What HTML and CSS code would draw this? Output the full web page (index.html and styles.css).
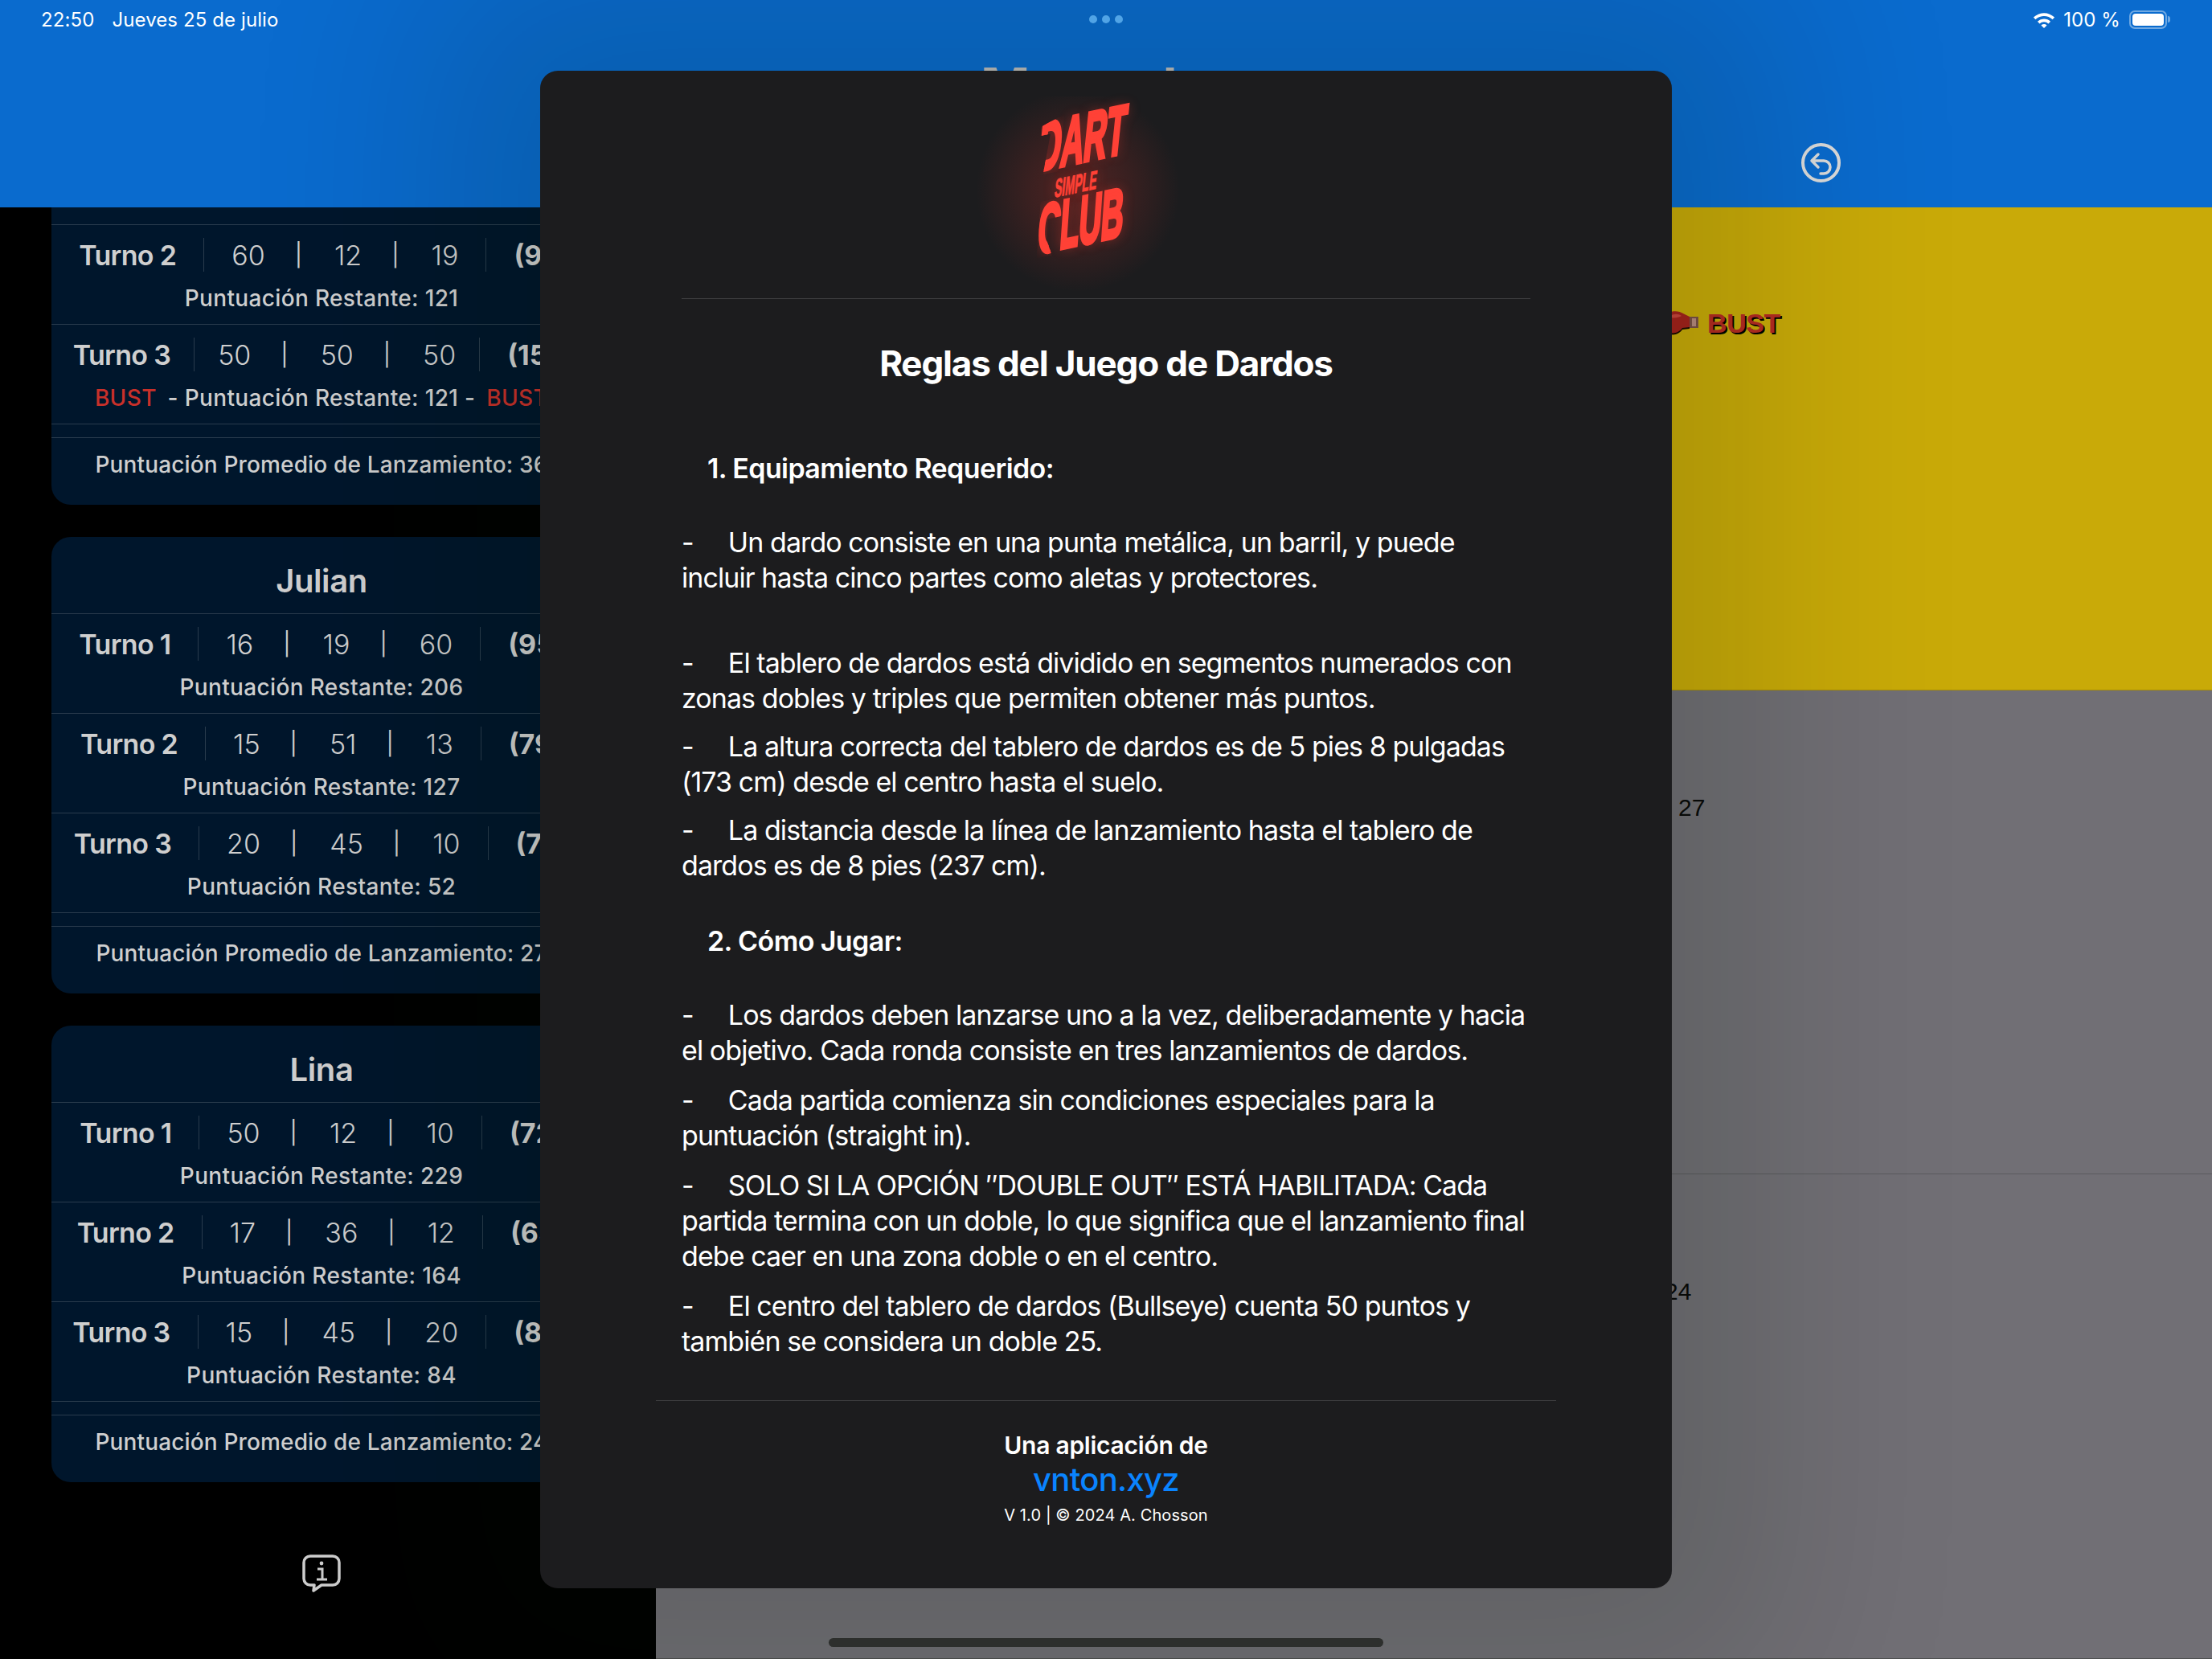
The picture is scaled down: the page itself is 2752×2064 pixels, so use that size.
FILE: index.html
```html
<!DOCTYPE html>
<html lang="es">
<head>
<meta charset="utf-8">
<title>Marcador</title>
<link rel="stylesheet" href="styles.css">
</head>
<body>
<div class="app">
  <header class="header">
    <div class="status">
      <div class="status-left"><span>22:50</span><span>Jueves 25 de julio</span></div>
      <div class="dots"><i></i><i></i><i></i></div>
      <div class="status-right">
        <svg class="wifi" viewBox="0 0 28 20" width="30" height="21"><path d="M1.5 7.2a18 18 0 0 1 25 0l-2.400 2.600a14.500 14.500 0 0 0-20.200 0z" fill="#fff"/><path d="M6.300 12.200a11 11 0 0 1 15.400 0l-2.500 2.500a7.500 7.500 0 0 0-10.400 0z" fill="#fff"/><path d="M10.600 16.600a5 5 0 0 1 6.800 0L14 20z" fill="#fff"/></svg>
        <span>100 %</span>
        <div class="battery"><div class="battery-fill"></div></div>
        <div class="battery-nub"></div>
      </div>
    </div>
    <div class="header-bar">
      <div></div>
      <h1 class="app-title">Marcador</h1>
      <div class="header-actions">
        <svg viewBox="0 0 49 49" width="49" height="49" fill="none" stroke="#dcdcdc"><circle cx="24.500" cy="24.500" r="22.500" stroke-width="4"/><path d="M21 14l-8 8 8 8M13 22h15a8 8 0 0 1 0 16h-4" stroke-width="3.500" stroke-linecap="round" stroke-linejoin="round"/></svg>
      </div>
    </div>
  </header>

  <main class="main">
    <aside class="sidebar">
      <section class="card card-scrolled">
        <div class="card-clip"></div>
        <div class="row">
          <div class="turn"><span class="label">Turno 2</span><span class="scores"><span class="num">60</span><span class="pipe">|</span><span class="num">12</span><span class="pipe">|</span><span class="num">19</span></span><span class="total">(91)</span></div>
          <p class="rest">Puntuación Restante: 121</p>
        </div>
        <div class="row">
          <div class="turn turn-wide"><span class="label">Turno 3</span><span class="scores"><span class="num">50</span><span class="pipe">|</span><span class="num">50</span><span class="pipe">|</span><span class="num">50</span></span><span class="total">(150)</span></div>
          <p class="rest"><span class="bust">BUST</span> - Puntuación Restante: 121 - <span class="bust">BUST</span></p>
        </div>
        <div class="spacer"></div>
        <p class="avg">Puntuación Promedio de Lanzamiento: 36</p>
      </section>

      <section class="card">
        <h2 class="name">Julian</h2>
        <div class="row">
          <div class="turn"><span class="label">Turno 1</span><span class="scores"><span class="num">16</span><span class="pipe">|</span><span class="num">19</span><span class="pipe">|</span><span class="num">60</span></span><span class="total">(95)</span></div>
          <p class="rest">Puntuación Restante: 206</p>
        </div>
        <div class="row">
          <div class="turn"><span class="label">Turno 2</span><span class="scores"><span class="num">15</span><span class="pipe">|</span><span class="num">51</span><span class="pipe">|</span><span class="num">13</span></span><span class="total">(79)</span></div>
          <p class="rest">Puntuación Restante: 127</p>
        </div>
        <div class="row">
          <div class="turn"><span class="label">Turno 3</span><span class="scores"><span class="num">20</span><span class="pipe">|</span><span class="num">45</span><span class="pipe">|</span><span class="num">10</span></span><span class="total">(75)</span></div>
          <p class="rest">Puntuación Restante: 52</p>
        </div>
        <div class="spacer"></div>
        <p class="avg">Puntuación Promedio de Lanzamiento: 27</p>
      </section>

      <section class="card">
        <h2 class="name">Lina</h2>
        <div class="row">
          <div class="turn"><span class="label">Turno 1</span><span class="scores"><span class="num">50</span><span class="pipe">|</span><span class="num">12</span><span class="pipe">|</span><span class="num">10</span></span><span class="total">(72)</span></div>
          <p class="rest">Puntuación Restante: 229</p>
        </div>
        <div class="row">
          <div class="turn"><span class="label">Turno 2</span><span class="scores"><span class="num">17</span><span class="pipe">|</span><span class="num">36</span><span class="pipe">|</span><span class="num">12</span></span><span class="total">(65)</span></div>
          <p class="rest">Puntuación Restante: 164</p>
        </div>
        <div class="row">
          <div class="turn"><span class="label">Turno 3</span><span class="scores"><span class="num">15</span><span class="pipe">|</span><span class="num">45</span><span class="pipe">|</span><span class="num">20</span></span><span class="total">(80)</span></div>
          <p class="rest">Puntuación Restante: 84</p>
        </div>
        <div class="spacer"></div>
        <p class="avg">Puntuación Promedio de Lanzamiento: 24</p>
      </section>

      <div class="info">
        <svg viewBox="0 0 48 47" width="48" height="47" fill="none" stroke="#cfcfcf"><path d="M10 2h28a8 8 0 0 1 8 8v20a8 8 0 0 1-8 8H24l-10 7 1-7h-5a8 8 0 0 1-8-8V10a8 8 0 0 1 8-8z" stroke-width="3.500" stroke-linejoin="round"/><circle cx="24" cy="11" r="2.400" fill="#cfcfcf" stroke="none"/><path d="M19 18h6v12M18 31h13" stroke-width="3"/></svg>
      </div>
    </aside>

    <div class="panes">
      <section class="pane pane-active">
        <div class="bust-flag">
          <svg class="glove" viewBox="0 0 40 30" width="40" height="30"><path d="M0 4C6 0 14 1 18 5l8 3v14l-9 1C13 29 5 31 0 28z" fill="#1a0a00"/><path d="M0 2C6-1 14 0 18 3l8 4v13l-9 1C13 27 5 29 0 26z" fill="#a5211c"/><path d="M2 6c5-3 10-3 14 0-3 2-9 3-14 2z" fill="#c9453c"/><rect x="26" y="7" width="11" height="14" fill="#7a4f46"/><rect x="29" y="9" width="5" height="10" fill="#b98a7e"/></svg>
          <span class="bust-word">BUST</span>
        </div>
      </section>
      <section class="pane pane-grey"><span class="pane-score pane-score-a">27</span></section>
      <section class="pane pane-grey pane-last"><span class="pane-score pane-score-b">24</span></section>
    </div>
  </main>

  <div class="home-indicator"></div>

  <div class="modal">
    <div class="modal-logo">
      <div class="logo">
        <span class="logo-big logo-dart"><span class="logo-d">D</span>ART</span>
        <span class="logo-small">SIMPLE</span>
        <span class="logo-big logo-club"><span class="logo-c">C</span>LUB</span>
      </div>
    </div>
    <article class="rules">
      <h2 class="rules-title">Reglas del Juego de Dardos</h2>
      <h3 class="rules-head">1. Equipamiento Requerido:</h3>
      <p class="rule rule-wide">-     Un dardo consiste en una punta metálica, un barril, y puede incluir hasta cinco partes como aletas y protectores.</p>
      <p class="rule">-     El tablero de dardos está dividido en segmentos numerados con zonas dobles y triples que permiten obtener más puntos.</p>
      <p class="rule">-     La altura correcta del tablero de dardos es de 5 pies 8 pulgadas (173 cm) desde el centro hasta el suelo.</p>
      <p class="rule rule-end">-     La distancia desde la línea de lanzamiento hasta el tablero de dardos es de 8 pies (237 cm).</p>
      <h3 class="rules-head">2. Cómo Jugar:</h3>
      <p class="rule rule-loose">-     Los dardos deben lanzarse uno a la vez, deliberadamente y hacia el objetivo. Cada ronda consiste en tres lanzamientos de dardos.</p>
      <p class="rule rule-loose">-     Cada partida comienza sin condiciones especiales para la puntuación (straight in).</p>
      <p class="rule rule-loose">-     SOLO SI LA OPCIÓN ″DOUBLE OUT″ ESTÁ HABILITADA: Cada partida termina con un doble, lo que significa que el lanzamiento final debe caer en una zona doble o en el centro.</p>
      <p class="rule">-     El centro del tablero de dardos (Bullseye) cuenta 50 puntos y también se considera un doble 25.</p>
    </article>
    <footer class="modal-footer">
      <p class="credit">Una aplicación de</p>
      <p class="credit-link">vnton.xyz</p>
      <p class="credit-small">V 1.0 | © 2024 A. Chosson</p>
    </footer>
  </div>
</div>
</body>
</html>
```
FILE: styles.css
```css
* { box-sizing: border-box; margin: 0; padding: 0; }
html, body { width: 2752px; height: 2064px; overflow: hidden; background: #000; }
body { font-family: Inter, "Liberation Sans", sans-serif; color: #fff; }

.app { position: relative; width: 2752px; height: 2064px; display: flex; flex-direction: column; overflow: hidden; }

/* Header */
.header { height: 258px; background: #0a6bce; flex: none; }
.status { height: 48px; padding: 0 52px 0 51px; display: grid; grid-template-columns: 1fr auto 1fr; align-items: center; font-size: 24px; letter-spacing: .1px; }
.status-left { display: flex; gap: 22px; }
.status-right { display: flex; align-items: center; justify-content: flex-end; }
.status-right span { margin-left: 9px; margin-right: 11px; }
.dots { display: flex; gap: 6px; }
.dots i { width: 10px; height: 10px; border-radius: 50%; background: #5ab4ff; }
.battery { width: 47px; height: 23px; border: 2px solid rgba(255,255,255,.42); border-radius: 7px; padding: 2px; }
.battery-fill { width: 100%; height: 100%; background: #fff; border-radius: 4px; }
.battery-nub { width: 3px; height: 8px; background: rgba(255,255,255,.42); border-radius: 0 3px 3px 0; margin-left: 1px; }

.header-bar { display: grid; grid-template-columns: 1fr auto 1fr; align-items: start; }
.app-title { font-size: 66px; font-weight: 700; line-height: 80px; color: #bdbdbd; margin-top: 20px; }
.header-actions { padding-left: 709px; padding-top: 130px; height: 49px; }

/* Main */
.main { flex: 1; display: flex; min-height: 0; }
.sidebar { width: 816px; background: #000; padding: 0 80px 0 64px; display: flex; flex-direction: column; gap: 40px; overflow: hidden; }

.card { background: #00162c; border-radius: 24px; flex: none; overflow: hidden; color: #cfcfcf; }
.card-scrolled { border-radius: 0 0 24px 24px; }
.card-clip { height: 22px; border-bottom: 1px solid rgba(255,255,255,.16); }
.name { height: 96px; padding-top: 14px; display: flex; align-items: center; justify-content: center; font-size: 40px; font-weight: 600; letter-spacing: -0.4px; border-bottom: 1px solid rgba(255,255,255,.16); }
.row { height: 124px; border-bottom: 1px solid rgba(255,255,255,.16); padding-top: 16px; text-align: center; }
.turn { display: flex; justify-content: center; align-items: center; height: 42px; font-size: 34px; white-space: nowrap; }
.label { font-weight: 600; padding-right: 34px; letter-spacing: -0.7px; }
.scores { display: flex; align-items: center; height: 42px; border-left: 1px solid rgba(255,255,255,.16); border-right: 1px solid rgba(255,255,255,.16); padding: 0 34px; font-weight: 300; }
.pipe { margin: 0 40px 0 37px; font-size: 28px; font-weight: 400; }
.total { font-weight: 700; padding-left: 34px; }
.turn-wide .label { padding-right: 29px; }
.turn-wide .scores { padding: 0 29px; }
.turn-wide .total { margin-right: -7px; }
.rest { font-size: 28px; font-weight: 500; letter-spacing: .35px; line-height: 34px; margin-top: 16px; white-space: nowrap; }
.bust { color: #c8302a; margin: 0 6px; }
.spacer { height: 17px; border-bottom: 1px solid rgba(255,255,255,.16); }
.avg { height: 83px; padding-top: 16px; font-size: 28px; font-weight: 500; letter-spacing: .15px; line-height: 34px; text-align: center; white-space: nowrap; }

.info { flex: none; display: flex; justify-content: center; margin-top: 50px; }

/* Right panes */
.panes { flex: 1; display: flex; flex-direction: column; min-width: 0; }
.pane { flex: none; }
.pane-active { height: 601px; background: #c9aa08; border-bottom: 1px solid #a88d05; padding: 126px 0 0 1260px; }
.pane-grey { height: 602px; background: #716f75; border-bottom: 1px solid #5b5b5f; }
.pane-last { flex: 1; border-bottom-color: #4f5050; }
.bust-flag { display: flex; align-items: center; gap: 8px; }
.bust-word { font-family: "Liberation Sans", sans-serif; font-size: 34px; font-weight: 700; letter-spacing: -.4px; line-height: 36px; color: #b52b22; text-shadow: 2px 2px 0 #000; }
.pane-score { display: block; font-family: "Liberation Sans", sans-serif; font-size: 30px; line-height: 34px; color: #0a0a0a; }
.pane-score-a { padding: 129px 0 0 1272px; }
.pane-score-b { padding: 129px 0 0 1255px; }

.home-indicator { position: absolute; left: 1031px; top: 2038px; width: 690px; height: 11px; border-radius: 6px; background: #323232; }

/* Modal */
.modal { position: absolute; left: 672px; top: 88px; width: 1408px; height: 1888px; background: #1c1c1e; border-radius: 22px; padding-top: 32px; box-shadow: 0 0 240px 130px rgba(0,24,0,.14); color: #fff; }
.modal-logo { margin: 0 176px; height: 252px; border-bottom: 1px solid #3d3d3f; display: flex; justify-content: center; }
.logo { width: 254px; height: 243px; margin-right: 70px; display: flex; flex-direction: column; align-items: center; padding-top: 17px; background: radial-gradient(ellipse 50% 52% at 50% 48%, rgba(255,59,48,.24) 0%, rgba(255,59,48,.14) 45%, rgba(255,59,48,0) 100%); font-family: "Liberation Sans", sans-serif; font-weight: 700; color: #ff4136; white-space: nowrap; text-shadow: 0 0 22px rgba(255,59,48,.45); }
.logo-big { display: block; font-size: 85px; line-height: 70px; height: 70px; -webkit-text-stroke: 5px #ff4136; }
.logo-dart { transform: translateX(6px) skewY(-12deg) skewX(-6deg) scaleX(.46); }
.logo-club { transform: translateX(4px) skewY(-12deg) skewX(-4deg) scaleX(.45); margin-top: -1px; }
.logo-small { display: block; font-size: 32px; line-height: 24px; height: 24px; margin-top: 10px; -webkit-text-stroke: 1px #ff4136; transform: translateX(-2px) skewY(-12deg) skewX(-6deg) scaleX(.44); }
.logo-d, .logo-c { display: inline-block; }
.logo-d { clip-path: polygon(0 14%, 100% 0, 100% 100%, 30% 100%, 45% 30%, 0 30%); }
.logo-c { clip-path: polygon(0 0, 100% 0, 100% 34%, 40% 34%, 40% 70%, 70% 100%, 0 100%); }

.rules { padding: 0 176px; }
.rules-title { font-size: 44px; font-weight: 700; line-height: 60px; text-align: center; margin-top: 50px; letter-spacing: -1.15px; }
.rules-head { font-size: 34px; font-weight: 600; line-height: 44px; padding-left: 32px; margin-top: 79px; margin-bottom: 48px; letter-spacing: -0.6px; }
.rule-end + .rules-head { margin-top: 50px; }
.rule { font-size: 34px; font-weight: 400; line-height: 44px; margin-bottom: 16px; letter-spacing: -0.93px; white-space: pre-wrap; }
.rule-wide { margin-bottom: 62px; }
.rule-end { margin-bottom: 0; }
.rule-loose { margin-bottom: 18px; }

.modal-footer { margin: 51px 144px 0; border-top: 1px solid #3d3d3f; text-align: center; }
.credit { font-size: 30px; font-weight: 600; line-height: 40px; margin-top: 35px; letter-spacing: -0.25px; }
.credit-link { font-size: 40px; font-weight: 500; line-height: 46px; color: #0a84ff; letter-spacing: -0.7px; }
.credit-small { font-size: 20px; font-weight: 400; line-height: 30px; margin-top: 6px; letter-spacing: .1px; }
```
